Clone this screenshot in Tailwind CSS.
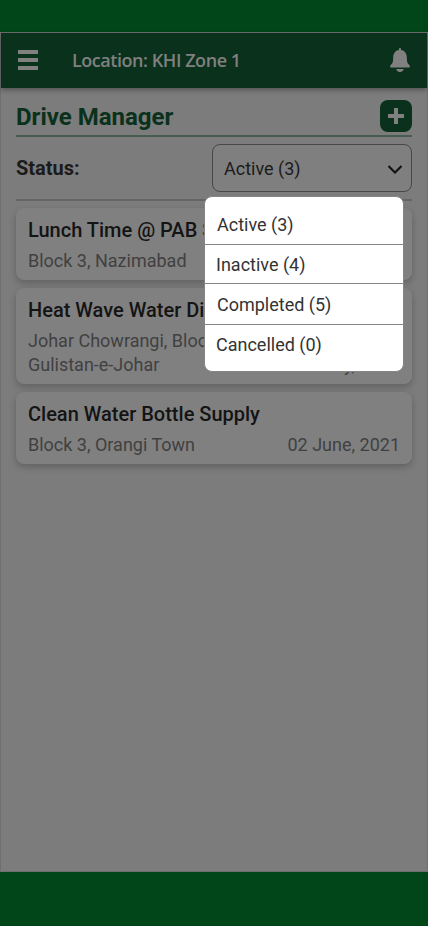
<!DOCTYPE html>
<html lang="en">
<head>
<meta charset="utf-8">
<title>Drive Manager</title>
<script src="https://cdn.jsdelivr.net/npm/@tailwindcss/browser@4"></script>
</head>
<body class="bg-[#004619]">
<div class="w-[428px] h-[926px] overflow-hidden pt-8 bg-[#004619] font-['Roboto',sans-serif]">
  <div class="relative h-[840px] bg-[#7c7c7c] border border-[#6f6f6f]">
    <header class="h-[55px] bg-[#0a311b] flex items-center pl-[17px] pr-[17px] pb-0.5 shadow-[0_2px_5px_rgba(0,0,0,0.35)]">
      <div class="w-5 flex flex-col gap-1">
        <span class="h-1 bg-[#808080]"></span>
        <span class="h-1 bg-[#808080]"></span>
        <span class="h-1 bg-[#808080]"></span>
      </div>
      <h1 class="ml-[34px] flex-1 whitespace-nowrap text-[18px] leading-6 font-semibold tracking-[-0.45px] text-[#808080] font-['Open_Sans','Noto_Sans',sans-serif]">Location: KHI Zone 1</h1>
      <svg class="w-5 h-6" viewBox="0 0 20 24" fill="#808080">
        <path d="M10 0C9.400 0 9 .45 9 1v.9C5.200 2.500 3.300 5.300 3.200 9c-.1 4-.3 5.700-1.500 7.100C1 16.900 0 17.500 0 18.600c0 .5.300.8.900.8h18.200c.6 0 .9-.3.900-.8 0-1.100-1-1.700-1.700-2.500-1.200-1.400-1.400-3.100-1.500-7.100-.1-3.700-2-6.500-5.800-7.100V1c0-.55-.4-1-1-1z"/>
        <path d="M6.300 21h7.400c-.3 1.800-1.800 3-3.700 3s-3.400-1.200-3.700-3z"/>
      </svg>
    </header>

    <main class="px-[15px]">
      <div class="h-[49px] pt-3 border-b-2 border-[#465d4f] flex justify-between">
        <h2 class="text-[24px] leading-[34px] font-bold text-[#0a311b]">Drive Manager</h2>
        <button class="w-8 h-8 rounded-lg bg-[#0a311b] flex items-center justify-center">
          <svg class="w-4 h-4" viewBox="0 0 16 16"><path d="M6 0h4v6h6v4h-6v6H6v-6H0V6h6z" fill="#808080"/></svg>
        </button>
      </div>

      <div class="h-16 pt-[7px] border-b-2 border-[#656565] flex justify-between">
        <span class="text-[20px] leading-[48px] font-bold text-[#1b1b1b]">Status:</span>
        <div class="w-[200px] h-12 rounded-lg border border-[#484848] bg-[#7f7f7f] pt-0.5 pl-[11px] pr-[9px] flex items-center justify-between">
          <span class="text-[18px] leading-6 text-[#1b1b1b]">Active (3)</span>
          <svg class="w-[14px] h-[9px]" viewBox="0 0 14 9" fill="none" stroke="#111" stroke-width="2"><path d="M.5 1 7 7.500 13.500 1"/></svg>
        </div>
      </div>

      <section class="pt-[7px] flex flex-col gap-2">
        <article class="h-[72px] rounded-lg bg-[#808080] px-3 pt-2.5 shadow-[0_3px_7px_rgba(0,0,0,0.22)]">
          <h3 class="text-[20px] leading-6 font-medium text-[#141414]">Lunch Time @ PAB Slums</h3>
          <div class="pt-[7px] flex justify-between text-[18px] leading-6 text-[#404040]">
            <p>Block 3, Nazimabad</p><p>02 May, 2021</p>
          </div>
        </article>
        <article class="h-24 rounded-lg bg-[#808080] px-3 pt-2.5 shadow-[0_3px_7px_rgba(0,0,0,0.22)]">
          <h3 class="text-[20px] leading-6 font-medium text-[#141414]">Heat Wave Water Distribution</h3>
          <div class="pt-[7px] flex justify-between items-end text-[18px] leading-6 text-[#404040]">
            <p>Johar Chowrangi, Block 7,<br>Gulistan-e-Johar</p><p>20 May, 2021</p>
          </div>
        </article>
        <article class="h-[72px] rounded-lg bg-[#808080] px-3 pt-2.5 shadow-[0_3px_7px_rgba(0,0,0,0.22)]">
          <h3 class="text-[20px] leading-6 font-medium text-[#141414]">Clean Water Bottle Supply</h3>
          <div class="pt-[7px] flex justify-between text-[18px] leading-6 text-[#404040]">
            <p>Block 3, Orangi Town</p><p>02 June, 2021</p>
          </div>
        </article>
      </section>
    </main>

    <ul class="absolute left-[203px] top-[163px] w-[200px] h-[176px] rounded-lg border border-[#858585] bg-white overflow-hidden text-[18px] leading-6 text-[#333]">
      <li class="h-12 pt-4 pl-3 border-b border-[#858585]">Active (3)</li>
      <li class="h-[39px] pt-2 pl-[11px] border-b border-[#858585]">Inactive (4)</li>
      <li class="h-[41px] pt-[9px] pl-3 border-b border-[#858585]">Completed (5)</li>
      <li class="pt-2 pl-[11px]">Cancelled (0)</li>
    </ul>
  </div>
</div>
</body>
</html>
